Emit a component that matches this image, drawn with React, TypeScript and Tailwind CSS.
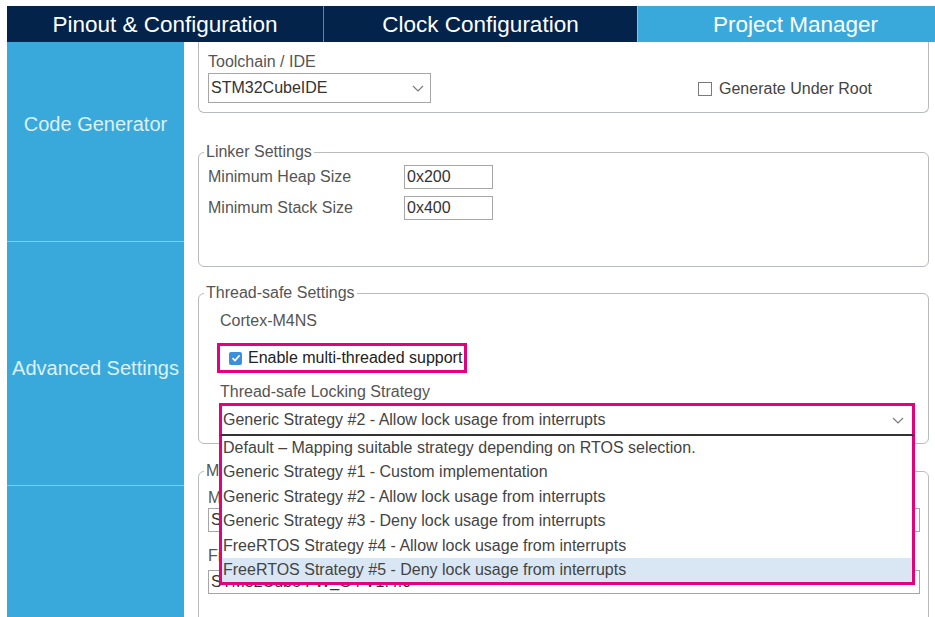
import React from "react";

const MAGENTA = "border-[#e5007e]";

function Chevron({ className = "" }: { className?: string }) {
  return (
    <svg width="12" height="7" viewBox="0 0 12 7" className={className}>
      <polyline points="1,1 6,6 11,1" fill="none" stroke="#7a7a7a" strokeWidth="1.2" />
    </svg>
  );
}

const options = [
  "Default \u2013 Mapping suitable strategy depending on RTOS selection.",
  "Generic Strategy #1 - Custom implementation",
  "Generic Strategy #2 - Allow lock usage from interrupts",
  "Generic Strategy #3 - Deny lock usage from interrupts",
  "FreeRTOS Strategy #4 - Allow lock usage from interrupts",
  "FreeRTOS Strategy #5 - Deny lock usage from interrupts",
];

export default function App() {
  return (
    <div className="w-[935px] h-[617px] overflow-hidden bg-white pl-[7px] pt-[6px] flex flex-col font-['Liberation_Sans',Arial,sans-serif]">
      {/* Tab bar */}
      <div className="h-[36px] flex shrink-0 text-[22.5px] text-white">
        <div className="w-[316px] shrink-0 bg-[#03234b] flex items-center justify-center pt-[2px]">Pinout &amp; Configuration</div>
        <div className="w-[1px] shrink-0 bg-[#6f7f95]" />
        <div className="w-[313px] shrink-0 bg-[#03234b] flex items-center justify-center pt-[2px]">Clock Configuration</div>
        <div className="w-[1px] shrink-0 bg-[#9fb7cc]" />
        <div className="w-[315px] shrink-0 bg-[#39a9dc] flex items-center justify-center pt-[2px]">Project Manager</div>
      </div>

      <div className="flex flex-1 min-h-0">
        {/* Sidebar */}
        <div className="w-[177px] shrink-0 bg-[#39a9dc] flex flex-col text-[20px] text-[#dcf0fa]">
          <div className="h-[199px] flex justify-center pt-[67px]">Code Generator</div>
          <div className="h-[1px] bg-[#86cbec]" />
          <div className="h-[243px] flex items-center justify-center pt-[9px]">Advanced Settings</div>
          <div className="h-[1px] bg-[#86cbec]" />
          <div className="flex-1" />
        </div>

        {/* Content */}
        <div className="flex-1 pl-[14px] pr-[6px] text-[16px] text-[#555] flex flex-col">
          {/* Group 1 (top cut off) */}
          <div className="border-x border-b border-[#b7bbbf] rounded-b-[6px] pt-[11px] pb-[9px] pl-[9px]">
            <div className="leading-[18px]">Toolchain / IDE</div>
            <div className="mt-[2px] flex items-center">
              <div className="w-[223px] h-[30px] border border-[#a6a6a6] flex items-center justify-between pl-[2px] pr-[6px] text-[#333]">
                <span>STM32CubeIDE</span>
                <Chevron />
              </div>
              <div className="ml-auto mr-[56px] flex items-center gap-[7px] mt-[2px]">
                <div className="w-[14px] h-[14px] border-[1.5px] border-[#7a7a7a] bg-white" />
                <span className="text-[#444]">Generate Under Root</span>
              </div>
            </div>
          </div>

          {/* Linker Settings */}
          <fieldset className="mt-[30px] border border-[#b7bbbf] rounded-[6px] pb-[46px]">
            <legend className="ml-[5px] px-[2px] leading-[18px]">Linker Settings</legend>
            <div className="mt-[4px] pl-[9px] flex flex-col gap-[7px]">
              <div className="flex items-center">
                <div className="w-[196px]">Minimum Heap Size</div>
                <div className="w-[89px] h-[24px] border border-[#a6a6a6] pl-[2px] flex items-center text-[#333]">0x200</div>
              </div>
              <div className="flex items-center">
                <div className="w-[196px]">Minimum Stack Size</div>
                <div className="w-[89px] h-[24px] border border-[#a6a6a6] pl-[2px] flex items-center text-[#333]">0x400</div>
              </div>
            </div>
          </fieldset>

          {/* Thread-safe Settings */}
          <fieldset className="relative z-10 mt-[17px] border border-[#b7bbbf] rounded-[6px] pb-[7px]">
            <legend className="ml-[5px] px-[2px] leading-[18px]">Thread-safe Settings</legend>
            <div className="pl-[21px] mt-[10px] leading-[18px]">Cortex-M4NS</div>
            <div className={`ml-[18px] mt-[13px] w-[250px] h-[30px] border-[3px] ${MAGENTA} flex items-center pl-[9px] gap-[6px]`}>
              <div className="w-[13px] h-[13px] rounded-[2px] bg-[#3b8fdb] flex items-center justify-center">
                <svg width="10" height="10" viewBox="0 0 10 10">
                  <polyline points="1.5,5.2 4,7.6 8.6,2.4" fill="none" stroke="white" strokeWidth="1.6" />
                </svg>
              </div>
              <span className="text-[#222]">Enable multi-threaded support</span>
            </div>
            <div className="pl-[21px] mt-[10px] leading-[18px]">Thread-safe Locking Strategy</div>
            <div className="relative ml-[20px] mt-[2px] w-[696px]">
              <div className={`h-[33px] border-t-[3px] border-x-[3px] border-b-[2px] ${MAGENTA} border-b-[#333] bg-white flex items-center justify-between pl-[1px] pr-[8px] text-[#444]`}>
                <span>Generic Strategy #2 - Allow lock usage from interrupts</span>
                <Chevron />
              </div>
              <div className={`absolute left-0 right-0 top-full border-x-[3px] border-b-[3px] ${MAGENTA} bg-white text-[#444]`}>
                {options.map((o, i) => (
                  <div
                    key={o}
                    className={`h-[24.4px] leading-[24.4px] pl-[1px] whitespace-nowrap ${i === 5 ? "bg-[#d9e7f4]" : ""}`}
                  >
                    {o}
                  </div>
                ))}
              </div>
            </div>
          </fieldset>

          {/* Mcu and Firmware Package (behind dropdown) */}
          <fieldset className="mt-[18px] border border-[#b7bbbf] rounded-t-[6px] pb-[30px]">
            <legend className="ml-[5px] px-[2px] leading-[18px]">Mcu and Firmware Package</legend>
            <div className="pl-[9px] pr-[8px]">
              <div className="mt-[9px] leading-[18px]">Mcu Reference</div>
              <div className="mt-[1px] h-[24px] border border-[#a6a6a6] pl-[2px] flex items-center text-[#333]">STM32G474RETx</div>
              <div className="mt-[15px] leading-[18px]">Firmware Package Name and Version</div>
              <div className="mt-[5px] h-[24px] border border-[#a6a6a6] pl-[2px] flex items-center text-[#333]">STM32Cube FW_G4 V1.4.0</div>
            </div>
          </fieldset>
        </div>
      </div>
    </div>
  );
}
